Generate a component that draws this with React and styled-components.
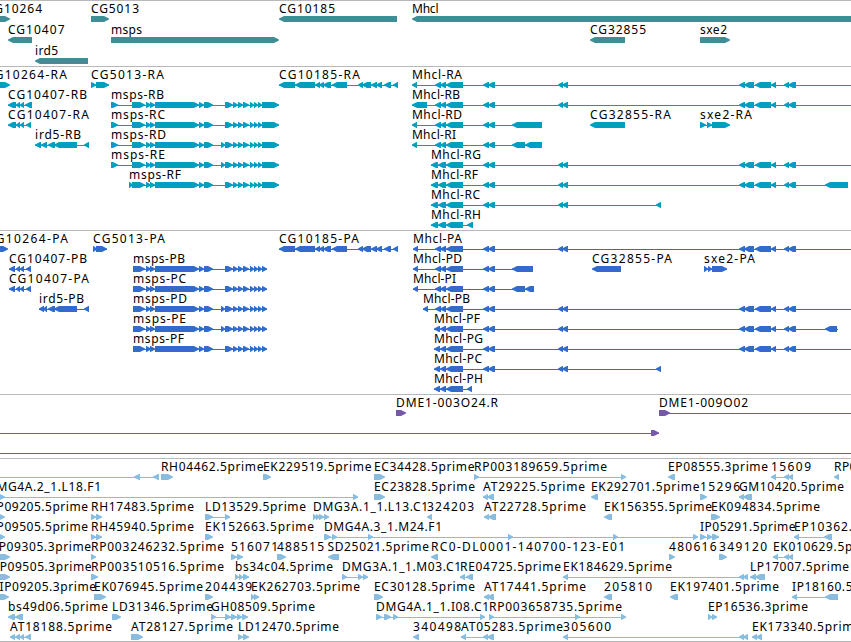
import React from 'react'
import styled, { createGlobalStyle } from 'styled-components'

// each feature: [label, label start, label end, strand, exons, line end (optional)]
const MHCL = '435-441 440-446 446-463'
const MID = '483-489 488-495'
const FAR = '558-563 562-568'
const DISTAL = '739-745 744-754 755-771 771-776 784-789 788-796'
const CG10185 = '279-295 295-315 315-320 319-324 323-331 332-347 358-363 362-371 371-377 376-382 384-391 393-398'
const MSPS_MID = '146-151 150-155 155-199 199-204 204-213'
const MSPS = `132-145 ${MSPS_MID}`
const MSPS_END = '225-233 233-238 238-243 243-249 250-254 254-258 258-262'

const genes = [
  [
    ['CG10264', -14, 42, 1, '-5-10'],
    ['CG5013', 91, 139, 1, '91-109'],
    ['CG10185', 279, 335, -1, '279-397'],
    ['Mhcl', 412, 438.5, -1, '412-870'],
  ],
  [
    ['CG10407', 8, 64.5, -1, '8-32'],
    ['msps', 111, 142, 1, '111-279'],
    ['CG32855', 590, 646, -1, '590-625'],
    ['sxe2', 700, 727, 1, '700-730'],
  ],
  [['ird5', 35, 58, -1, '35-88']],
]

const transcripts = [
  [
    ['CG10264-RA', -14, 67, 1, '-5-10'],
    ['CG5013-RA', 91, 164, 1, '91-96 96-109'],
    ['CG10185-RA', 279, 360, -1, CG10185],
    ['Mhcl-RA', 412, 462, -1, `412-417 ${MHCL} ${MID} ${FAR} ${DISTAL}`, 860],
  ],
  [
    ['CG10407-RB', 8, 87, -1, '8-16 16-20 20-24 25-32'],
    ['msps-RB', 111, 164, 1, `111-118 ${MSPS} ${MSPS_END} 262-279`],
    ['Mhcl-RB', 412, 460, -1, `412-427 ${MHCL} ${MID} ${FAR} ${DISTAL}`, 860],
  ],
  [
    ['CG10407-RA', 8, 89, -1, '8-16 16-20 20-24 26-31'],
    ['msps-RC', 111, 165, 1, `111-118 ${MSPS} ${MSPS_END} 262-279`],
    ['Mhcl-RD', 412, 462, -1, `412-417 ${MHCL} ${MID} 512-542`],
    ['CG32855-RA', 590, 671, -1, '590-625'],
    ['sxe2-RA', 700, 752, 1, '700-706 707-712 712-730'],
  ],
  [
    ['ird5-RB', 35, 81, -1, '35-41 41-47 48-55 54-77 84-89'],
    ['msps-RD', 111, 166, 1, `111-118 ${MSPS} 221-225 ${MSPS_END} 262-279`],
    ['Mhcl-RI', 412, 456, -1, `412-417 ${MHCL} ${MID} 512-525 525-542`],
  ],
  [
    ['msps-RE', 111, 165, 1, `111-118 ${MSPS} 221-225 ${MSPS_END} 262-279`],
    ['Mhcl-RG', 431, 481, -1, `431-438 438-446 446-463 ${MID} ${FAR} ${DISTAL}`, 860],
  ],
  [
    ['msps-RF', 129, 181, 1, `129-133 ${MSPS} ${MSPS_END} 262-279`],
    ['Mhcl-RF', 431, 478, -1, `431-438 438-446 446-463 ${MID} ${FAR} ${DISTAL} 825-848`],
  ],
  [['Mhcl-RC', 431, 480, -1, `431-438 438-446 446-463 ${MID} ${FAR} 656-661`]],
  [['Mhcl-RH', 431, 481, -1, '431-438 438-446 446-463 467-473']],
]

const proteins = [
  [
    ['CG10264-PA', -13, 68, 1, '-5-8'],
    ['CG5013-PA', 93, 165, 1, '93-97 96-107'],
    ['CG10185-PA', 279, 359, -1, CG10185],
    ['Mhcl-PA', 413, 462, -1, `413-418 ${MHCL} ${MID} ${FAR} ${DISTAL}`, 860],
  ],
  [
    ['CG10407-PB', 9, 87, -1, '9-15 16-20 20-24 26-31'],
    ['msps-PB', 133, 185, 1, `133-145 ${MSPS_MID} ${MSPS_END} 262-267`],
    ['Mhcl-PD', 413, 462, -1, `413-418 ${MHCL} ${MID} 512-533`],
    ['CG32855-PA', 592, 672, -1, '592-621'],
    ['sxe2-PA', 704, 755, 1, '704-708 708-712 712-727'],
  ],
  [
    ['CG10407-PA', 9, 89, -1, '9-15 16-20 20-24 26-31'],
    ['msps-PC', 133, 186, 1, `133-145 ${MSPS_MID} ${MSPS_END} 262-267`],
    ['Mhcl-PI', 413, 456, -1, `413-418 ${MHCL} ${MID} 512-525 525-534`],
  ],
  [
    ['ird5-PB', 39, 84, -1, '39-44 43-47 48-55 54-77 84-89'],
    ['msps-PD', 133, 187, 1, `133-145 ${MSPS_MID} 221-225 ${MSPS_END} 262-267`],
    ['Mhcl-PB', 423, 470, -1, `423-428 ${MHCL} ${MID} ${FAR} ${DISTAL}`, 860],
  ],
  [
    ['msps-PE', 133, 186, 1, `133-145 ${MSPS_MID} 221-225 ${MSPS_END} 262-267`],
    ['Mhcl-PF', 434, 480, -1, `434-440 440-446 446-463 ${MID} ${FAR} ${DISTAL} 825-837`, 838],
  ],
  [
    ['msps-PF', 133, 184, 1, `133-145 ${MSPS_MID} ${MSPS_END} 262-267`],
    ['Mhcl-PG', 434, 483, -1, `434-440 440-446 446-463 ${MID} ${FAR} ${DISTAL}`, 860],
  ],
  [['Mhcl-PC', 434, 482, -1, `434-440 440-446 446-463 ${MID} ${FAR} 656-661`]],
  [['Mhcl-PH', 434, 483, -1, '434-440 440-446 446-463 467-472']],
]

const bacs = [
  [
    ['DME1-003O24.R', 396, 498, 1, '396-406'],
    ['DME1-009O02', 659, 748, 1, '659-670', 860],
  ],
  [['', 0, 0, 1, '-15--10 651-659']],
  [['', 0, 0, 1, '-15--10', 860]],
]

const ests = [
  [
    ['', 0, 0, -1, '-15--10 134-140 153-159'],
    ['RH04462.5prime', 161, 263.5, 1, '161-173'],
    ['EK229519.5prime', 263, 371.5, 1, '263-271'],
    ['EC34428.5prime', 374, 474.5, 1, '374-385'],
    ['RP003189659.5prime', 474, 607, 1, '474-479 621-626'],
    ['EP08555.3prime', 668, 768, -1, '668-675'],
    ['15609', 771, 811, -1, '771-776 784-789 788-793'],
    ['RP003', 834, 871, -1, '834-839'],
  ],
  [
    ['DMG4A.2_1.L18.F1', -13, 101, 1, '-5-5 353-358'],
    ['EC23828.5prime', 374, 475, 1, '374-385'],
    ['AT29225.5prime', 483, 585, -1, '483-488 487-494'],
    ['EK292701.5prime', 591, 699.5, -1, '591-598'],
    ['15296', 700, 740, 1, '700-707'],
    ['GM10420.5prime', 739, 844, -1, '739-744 743-752'],
  ],
  [
    ['IP09205.5prime', -8, 88, 1, '-5-5'],
    ['RH17483.5prime', 91, 194, 1, '91-96 96-102'],
    ['LD13529.5prime', 205, 306, 1, '205-213 225-230'],
    ['DMG3A.1_1.L13.C1', 313, 428, 1, '313-317 316-320 319-324 324-329'],
    ['324203', 427, 474, -1, '427-432'],
    ['AT22728.5prime', 484, 586, -1, '484-489 488-496'],
    ['EK156355.5prime', 604, 712, -1, '604-612'],
    ['EK094834.5prime', 711, 820, 1, '711-720'],
  ],
  [
    ['IP09505.5prime', -8, 88, 1, '-5-5'],
    ['RH45940.5prime', 91, 194, 1, '91-96 96-102'],
    ['EK152663.5prime', 205, 314, 1, '205-213'],
    ['DMG4A.3_1.M24.F1', 324, 442, 1, '324-331 332-337 368-373 508-513 613-618 693-698'],
    ['IP05291.5prime', 700, 795.5, 1, '700-706 707-712 712-719'],
    ['EP10362.5prime', 794, 898, -1, '794-799 824-832'],
  ],
  [
    ['IP09305.3prime', -6, 91, 1, '-5-10'],
    ['RP003246232.5prime', 91, 224, 1, '91-96'],
    ['516071', 231, 278, 1, '231-237 237-243'],
    ['488515', 277, 324, 1, '277-286'],
    ['SD25021.5prime', 327.5, 429, -1, '328-339'],
    ['RC0-DL0001-140700-123-E01', 431, 625, -1, '431-438'],
    ['480616', 669, 716.5, 1, '669-675'],
    ['349120', 719, 767, 1, '719-727'],
    ['EK010629.5prime', 773, 881, -1, '773-778 784-789 788-793'],
  ],
  [
    ['IP09505.3prime', -5, 91.5, 1, '-5-10'],
    ['RP003510516.5prime', 91, 224, 1, '91-98'],
    ['bs34c04.5prime', 235, 333, 1, '235-239 239-243 243-249'],
    ['DMG3A.1_1.M03.C1', 342, 461, 1, '342-347 358-363 363-368'],
    ['RE04725.5prime', 460, 561, -1, '460-465 466-473'],
    ['EK184629.5prime', 563, 672, -1, '563-568 739-744 743-748'],
    ['LP17007.5prime', 750, 849, -1, '750-756 755-765'],
  ],
  [
    ['IP09205.3prime', -0.5, 96, 1, '-5-9'],
    ['EK076945.5prime', 94, 203, 1, '94-106'],
    ['204439', 205, 252, 1, '205-213'],
    ['EK262703.5prime', 251, 360, 1, '251-255 254-259'],
    ['EC30128.5prime', 374, 475, 1, '374-383'],
    ['AT17441.5prime', 484, 586, -1, '484-489 487-494'],
    ['205810', 604, 652, -1, '604-612'],
    ['EK197401.5prime', 670, 779, -1, '670-678'],
    ['IP18160.5prime', 792, 889, -1, '792-797 825-838'],
  ],
  [
    ['bs49d06.5prime', 8, 108, -1, '8-15 15-23'],
    ['LD31346.5prime', 112, 213, 1, '112-121'],
    ['GH08509.5prime', 211, 315, 1, '211-216 225-231 231-237 237-242 242-248'],
    ['DMG4A.1_1.I08.C1', 376, 489, 1, '376-382 384-391 393-398 480-485'],
    ['RP003658735.5prime', 489, 622, 1, '489-494 575-580 621-626'],
    ['EP16536.3prime', 708, 808, 1, '708-712 712-717'],
  ],
  [
    ['AT18188.5prime', 10, 112, -1, '10-15 15-20 20-24 25-31'],
    ['AT28127.5prime', 131, 233, 1, '131-143'],
    ['LD12470.5prime', 238, 339, 1, '238-243 243-249'],
    ['340498', 413, 461, -1, '413-419'],
    ['AT05283.5prime', 461, 563, -1, '461-466 483-488 487-494'],
    ['305600', 563, 611, -1, '563-568 739-744 743-748'],
    ['EK173340.5prime', 752, 861, -1, '752-757 756-762'],
  ],
]

const tracks = [
  { id: 'genes', color: '#3f8e95', rowHeight: 21, gap: 2, rows: genes },
  { id: 'transcripts', color: '#009fc1', rowHeight: 20, gap: 3, rows: transcripts },
  { id: 'proteins', color: '#316bcc', rowHeight: 20, gap: 3, rows: proteins },
  { id: 'bacs', color: '#7559a8', rowHeight: 20, gap: 3, rows: bacs },
  { id: 'ests', color: '#88bde0', rowHeight: 20, gap: 2, rows: ests },
]

const parseExons = (text) =>
  text.split(' ').map((part) => {
    const [, start, end] = part.match(/^(-?\d+)-(-?\d+)$/)
    return [Number(start), Number(end)]
  })

function Exon({ start, end, strand }) {
  const tip = Math.min(5, end - start - 0.5)
  const head = strand > 0 ? end : start
  const tail = strand > 0 ? start : end
  const at = (back) => head - strand * back
  const points = [
    [tail, 15],
    [at(tip), 15],
    [at(tip * 0.4), 16.4],
    [head, 17.4],
    [head, 18.4],
    [at(tip * 0.4), 19.6],
    [at(tip), 21],
    [tail, 21],
  ]
  return <polygon points={points.join(' ')} />
}

function Feature({ data }) {
  const [label, x, labelEnd, strand, exonText, lineEnd] = data
  const exons = parseExons(exonText)
  const from = exons[0][0]
  const to = lineEnd || exons[exons.length - 1][1]
  return (
    <g>
      {(exons.length > 1 || lineEnd) && <Intron x={from} y="18" width={to - from} height="1" />}
      {exons.map(([start, end]) => (
        <Exon key={start} start={start} end={end} strand={strand} />
      ))}
      {label && (
        <Label x={x} y="12" textLength={labelEnd - x}>
          {label}
        </Label>
      )}
    </g>
  )
}

function App() {
  return (
    <Browser>
      <GlobalStyle />
      {tracks.map((track) => (
        <Track key={track.id} $gap={track.gap}>
          {track.rows.map((row, i) => (
            <Lane key={i} $color={track.color} $height={track.rowHeight}>
              {row.map((feature, j) => (
                <Feature key={j} data={feature} />
              ))}
            </Lane>
          ))}
        </Track>
      ))}
    </Browser>
  )
}

export default App

const GlobalStyle = createGlobalStyle`
body {
  margin: 0;
  background: #fff;
  overflow: hidden;
}
`
const Browser = styled.div`
display: flex;
flex-direction: column;
width: 851px;
height: 642px;
box-sizing: border-box;
overflow: hidden;
background: #fff;
border-bottom: 1px solid #b8b8b8;
`
const Track = styled.section`
display: flex;
flex-direction: column;
flex-shrink: 0;
border-top: 1px solid #b8b8b8;
padding-bottom: ${(props) => props.$gap}px;
`
const Lane = styled.svg`
display: block;
width: 100%;
height: ${(props) => props.$height}px;
overflow: visible;
fill: ${(props) => props.$color};
`
const Intron = styled.rect`
shape-rendering: crispEdges;
`
const Label = styled.text`
fill: #000;
font-family: 'Noto Sans', 'Open Sans', sans-serif;
font-size: 12px;
`
